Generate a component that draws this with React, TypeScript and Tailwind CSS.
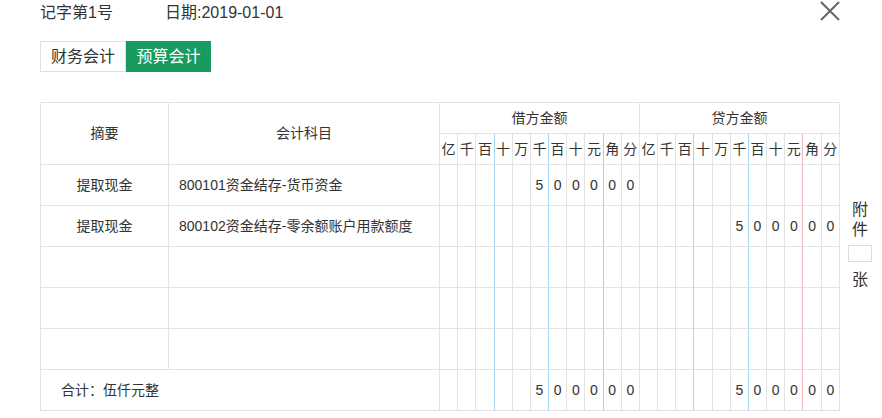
import React from "react"

const units = ["亿", "千", "百", "十", "万", "千", "百", "十", "元", "角", "分"]

type Row = { zy: string; km: string; jf: string; df: string }

const rows: Row[] = [
  { zy: "提取现金", km: "800101资金结存-货币资金", jf: "500000", df: "" },
  { zy: "提取现金", km: "800102资金结存-零余额账户用款额度", jf: "", df: "500000" },
  { zy: "", km: "", jf: "", df: "" },
  { zy: "", km: "", jf: "", df: "" },
  { zy: "", km: "", jf: "", df: "" },
]

// cents string -> 11 slots, right aligned
function toSlots(v: string) {
  const s = v.split("")
  return [...Array(11 - s.length).fill(""), ...s] as string[]
}

function lineCls(i: number) {
  if (i === 2 || i === 5) return "border-r border-r-[#a6d8f5]"
  if (i === 8) return "border-r border-r-[#ebb5ba]"
  return "border-r border-r-[#e3e3e3]"
}

const cell = "border-b border-b-[#e3e3e3]"

function Digits({ v }: { v: string }) {
  return (
    <>
      {toSlots(v).map((d, i) => (
        <td key={i} className={`${cell} ${lineCls(i)} p-0 text-center`}>{d}</td>
      ))}
    </>
  )
}

export default function App() {
  return (
    <div className="w-[882px] h-[418px] bg-white text-[#333] font-['Liberation_Sans','Noto_Sans_CJK_SC',sans-serif] pl-[40px]">
      <div className="h-[26px] flex items-center justify-between pr-[42px] text-[16px]">
        <div className="flex">
          <span className="w-[125px]">记字第1号</span>
          <span>日期:2019-01-01</span>
        </div>
        <svg width="20" height="20" viewBox="0 0 20 20" className="self-start mt-[1px]">
          <path d="M1 1 L19 19 M19 1 L1 19" stroke="#666" strokeWidth="2" />
        </svg>
      </div>

      <div className="mt-[15px] flex text-[16px] leading-[29px]">
        <button className="w-[86px] border border-[#e0e0e0] text-[#333]">财务会计</button>
        <button className="w-[85px] border border-[#199b5f] bg-[#199b5f] text-white">预算会计</button>
      </div>

      <div className="mt-[30px] flex">
        <table className="table-fixed w-[800px] border-separate border-spacing-0 border-t border-l border-[#e3e3e3] text-[14px]">
          <colgroup>
            <col className="w-[128px]" />
            <col className="w-[271px]" />
          </colgroup>
          <thead>
            <tr className="h-[31px]">
              <th rowSpan={2} className={`${cell} border-r border-r-[#e3e3e3] font-normal`}>摘要</th>
              <th rowSpan={2} className={`${cell} border-r border-r-[#e3e3e3] font-normal`}>会计科目</th>
              <th colSpan={11} className={`${cell} border-r border-r-[#e3e3e3] font-normal`}>借方金额</th>
              <th colSpan={11} className={`${cell} border-r border-r-[#e3e3e3] font-normal`}>贷方金额</th>
            </tr>
            <tr className="h-[31px]">
              {[...units, ...units].map((u, i) => (
                <th key={i} className={`${cell} ${lineCls(i % 11)} p-0 font-normal`}>{u}</th>
              ))}
            </tr>
          </thead>
          <tbody>
            {rows.map((r, i) => (
              <tr key={i} className="h-[41px]">
                <td className={`${cell} border-r border-r-[#e3e3e3] text-center`}>{r.zy}</td>
                <td className={`${cell} border-r border-r-[#e3e3e3] pl-[10px]`}>{r.km}</td>
                <Digits v={r.jf} />
                <Digits v={r.df} />
              </tr>
            ))}
            <tr className="h-[41px]">
              <td colSpan={2} className={`${cell} border-r border-r-[#e3e3e3] pl-[20px]`}>合计：伍仟元整</td>
              <Digits v="500000" />
              <Digits v="500000" />
            </tr>
          </tbody>
        </table>

        <div className="ml-[8px] w-[24px] pt-[98px] flex flex-col items-center text-[16px] leading-[20px]">
          <span>附</span>
          <span>件</span>
          <div className="mt-[5px] w-[24px] h-[17px] border border-[#ddd]" />
          <span className="mt-[8px]">张</span>
        </div>
      </div>
    </div>
  )
}
